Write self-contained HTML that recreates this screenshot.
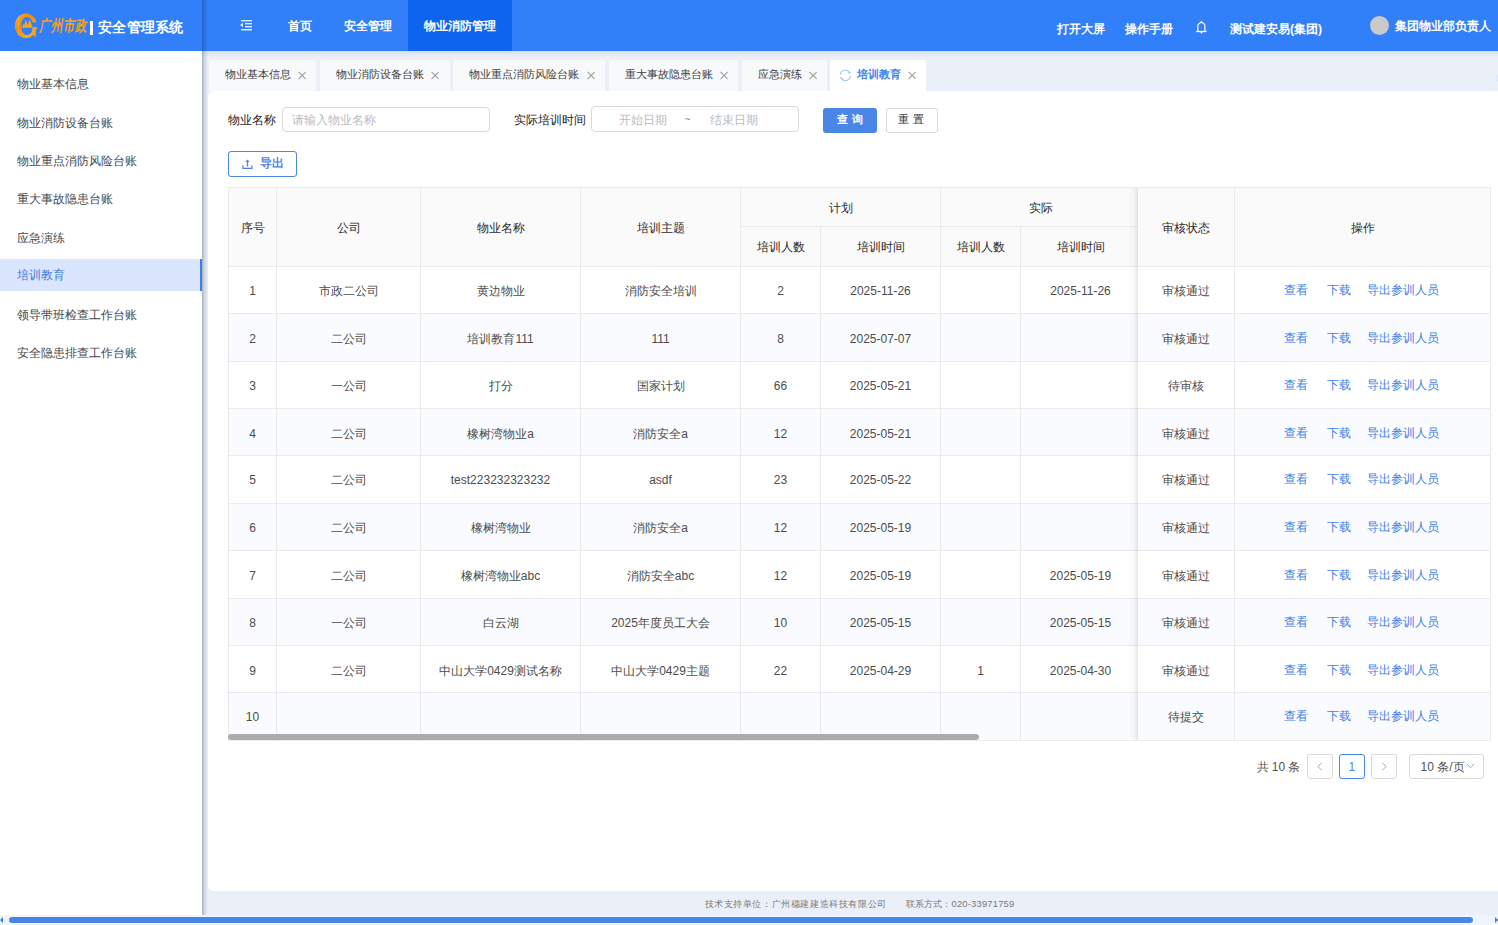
<!DOCTYPE html>
<html><head><meta charset="utf-8">
<style>
*{box-sizing:border-box;margin:0;padding:0}
html,body{width:1498px;height:925px;overflow:hidden;background:#fff;font-family:"Liberation Sans",sans-serif;}
.abs{position:absolute}
#hdr{position:absolute;left:0;top:0;width:1498px;height:51px;background:#317ff9;color:#fff}
#hdrsh{position:absolute;left:202px;top:51px;width:1296px;height:6px;background:linear-gradient(#dadee8,#ebf0f8)}
#side{position:absolute;left:0;top:51px;width:202px;height:864px;background:#fff}
#sidesh{position:absolute;left:202px;top:0;width:6px;height:915px;background:linear-gradient(90deg,rgba(0,20,60,.28),rgba(0,20,60,.12) 40%,rgba(0,20,60,0))}
#main{position:absolute;left:202px;top:51px;width:1296px;height:864px;background:#ebf0f8}
.t{position:absolute;white-space:nowrap;line-height:1}
.nav{font-size:12px;font-weight:bold;color:#fff}
.si{position:absolute;left:0;width:202px;height:32px;line-height:32px;padding-left:17px;font-size:12px;color:#48494c}
.si.act{background:#dae6fe;color:#3b7ae6}
.si.act:after{content:"";position:absolute;right:0;top:0;width:2px;height:32px;background:#3d7de6}
.tab{position:absolute;top:60px;height:31px;background:#f8f9fa;border-radius:3px 3px 0 0;font-size:11px;color:#48494c}
#card{position:absolute;left:208px;top:91px;width:1290px;height:800px;background:#fff;border-radius:6px 0 0 6px}

.tab .tx{position:absolute;top:69px;line-height:12px;font-size:11.25px}
.xx{position:absolute;width:8px;height:8px}
.xx:before,.xx:after{content:"";position:absolute;left:-1.2px;top:3.5px;width:10.4px;height:1px;background:#9a9a9a;transform:rotate(45deg)}
.xx:after{transform:rotate(-45deg)}
.lbl{position:absolute;font-size:12px;color:#1e1e1e;font-weight:500;line-height:1;white-space:nowrap}
.inp{position:absolute;border:1px solid #d9d9d9;border-radius:4px;background:#fff}
.ph{position:absolute;font-size:12px;color:#b8bcc4;line-height:1;white-space:nowrap}

.ln{position:absolute;background:#ebebeb}
.c{position:absolute;display:flex;align-items:center;justify-content:center;white-space:nowrap;font-size:12px;color:#4d4d4d;line-height:1;padding-top:2px}
.c.h{padding-top:1px}
.h{font-weight:500;color:#2b2b2b}
.c.lkc{color:#3f7fe6;font-weight:500;padding-top:0;justify-content:flex-start}
</style></head><body>
<div id="hdr">
 <svg class="abs" style="left:0;top:0" width="40" height="45" viewBox="0 0 40 45">
  <defs><linearGradient id="og" x1="0" y1="0" x2="1" y2="1"><stop offset="0" stop-color="#f7b224"/><stop offset="0.4" stop-color="#ee8a12"/><stop offset="0.75" stop-color="#f6ae22"/><stop offset="1" stop-color="#f39a18"/></linearGradient></defs>
  <ellipse cx="25.9" cy="25.75" rx="11" ry="12.25" fill="url(#og)"/>
  <rect x="21.5" y="17" width="11" height="18" rx="5.2" ry="6.5" fill="#317ff9"/>
  <rect x="30" y="22.4" width="9" height="4.9" fill="#317ff9"/>
  <rect x="33.8" y="27.3" width="2.1" height="9.3" fill="#f3a21c"/>
  <rect x="32.6" y="27.3" width="4.4" height="1.5" fill="#f3a21c"/>
  <path d="M18.3 16.5 L18.3 35.5" stroke="#f3d27a" stroke-width="0.6" opacity="0.7"/>
  <path d="M21.8 27.8 L23.8 23.4 L25 27.8 Z M23.6 27.8 L25.8 19.2 L28.4 27.8 Z M26.8 27.8 L29.6 19.2 L32.8 27.8 Z" fill="#f6a81c"/>
 </svg>
 <div class="t" style="left:41px;top:19px;font-size:11.5px;color:#f2a01c;font-weight:bold;transform-origin:0 0;transform:scale(1,1.35) skewX(-12deg);letter-spacing:0px">广州市政</div>
 <div class="abs" style="left:90px;top:21px;width:2.5px;height:14px;background:#fff"></div>
 <div class="t" style="left:98px;top:20px;font-size:14px;font-weight:bold;letter-spacing:0.3px">安全管理系统</div>
 <svg class="abs" style="left:240px;top:20px" width="13" height="12" viewBox="0 0 13 12">
  <g fill="#fff" opacity="0.85"><rect x="1" y="0" width="11" height="1.4"/><rect x="5" y="3" width="7" height="1.4"/><rect x="5" y="6" width="7" height="1.4"/><rect x="1" y="9" width="11" height="1.5"/><path d="M0 5 L3 2.8 L3 7.2 Z"/></g>
 </svg>
 <div class="t nav" style="left:288px;top:19.5px">首页</div>
 <div class="t nav" style="left:344px;top:19.5px">安全管理</div>
 <div class="abs" style="left:408px;top:0;width:104px;height:51px;background:#0e64ef"></div>
 <div class="t nav" style="left:424px;top:19.5px">物业消防管理</div>
 <div class="t nav" style="left:1057px;top:23px">打开大屏</div>
 <div class="t nav" style="left:1125px;top:23px">操作手册</div>
 <svg class="abs" style="left:1195px;top:20px" width="13" height="15" viewBox="0 0 13 15">
  <path d="M2.9 11.3 L2.9 5.6 Q2.9 4.2 4.2 3.5 L6.4 2.2 L8.6 3.5 Q9.9 4.2 9.9 5.6 L9.9 11.3" fill="none" stroke="#fff" stroke-width="1.15"/>
  <path d="M6.4 0.6 L7.6 2.6 L5.2 2.6 Z" fill="#fff"/>
  <path d="M1.2 11.5 L11.6 11.5" stroke="#fff" stroke-width="1.3"/>
  <path d="M5.2 12 L7.6 12 L6.4 14 Z" fill="#fff"/>
 </svg>
 <div class="t nav" style="left:1230px;top:22.5px">测试建安易(集团)</div>
 <div class="abs" style="left:1370px;top:16px;width:19px;height:19px;border-radius:50%;background:#cacaca"></div>
 <div class="t nav" style="left:1395px;top:19.5px">集团物业部负责人</div>
</div>
<div id="side"><div class="si" style="top:17px">物业基本信息</div><div class="si" style="top:56px">物业消防设备台账</div><div class="si" style="top:94px">物业重点消防风险台账</div><div class="si" style="top:132px">重大事故隐患台账</div><div class="si" style="top:171px">应急演练</div><div class="si act" style="top:208px">培训教育</div><div class="si" style="top:248px">领导带班检查工作台账</div><div class="si" style="top:286px">安全隐患排查工作台账</div></div>
<div id="main"></div>
<div id="hdrsh"></div>
<div id="sidesh"></div>
<div id="card"></div>
<div class="abs" style="left:1497px;top:75px;width:1px;height:6px;background:#d6e6fc"></div>
<div class="abs" style="left:209px;top:60px;width:107px;height:31px;background:#f8f9fa;border-radius:3px 3px 0 0"></div><div class="t" style="left:225.1px;top:69px;font-size:11.25px;color:#3e3f42;font-weight:normal">物业基本信息</div><div class="xx" style="left:298px;top:71px"></div><div class="abs" style="left:320px;top:60px;width:129.5px;height:31px;background:#f8f9fa;border-radius:3px 3px 0 0"></div><div class="t" style="left:335.8px;top:69px;font-size:11.25px;color:#3e3f42;font-weight:normal">物业消防设备台账</div><div class="xx" style="left:431.5px;top:71px"></div><div class="abs" style="left:453px;top:60px;width:152px;height:31px;background:#f8f9fa;border-radius:3px 3px 0 0"></div><div class="t" style="left:469.4px;top:69px;font-size:11.25px;color:#3e3f42;font-weight:normal">物业重点消防风险台账</div><div class="xx" style="left:587.4px;top:71px"></div><div class="abs" style="left:609px;top:60px;width:129px;height:31px;background:#f8f9fa;border-radius:3px 3px 0 0"></div><div class="t" style="left:625.0px;top:69px;font-size:11.25px;color:#3e3f42;font-weight:normal">重大事故隐患台账</div><div class="xx" style="left:720.3px;top:71px"></div><div class="abs" style="left:742px;top:60px;width:85px;height:31px;background:#f8f9fa;border-radius:3px 3px 0 0"></div><div class="t" style="left:757.7px;top:69px;font-size:11.25px;color:#3e3f42;font-weight:normal">应急演练</div><div class="xx" style="left:809.3px;top:71px"></div><div class="abs" style="left:830px;top:60px;width:96px;height:31px;background:#fff;border-radius:3px 3px 0 0"></div><div class="t" style="left:857.3px;top:69px;font-size:11.25px;color:#4485ea;font-weight:bold">培训教育</div><div class="xx" style="left:908.4px;top:71px"></div><svg class="abs" style="left:839px;top:68.7px" width="13" height="13" viewBox="0 0 13 13"><g fill="none" stroke="#a3c6fa" stroke-width="1.1"><path d="M1.25 5.68 A5.2 5.2 0 0 1 11.11 4.20"/><path d="M11.55 7.12 A5.2 5.2 0 0 1 1.69 8.60"/><path d="M9.0 3.9 L11.5 3.9"/><path d="M1.3 8.9 L3.8 8.9"/></g></svg>
<div class="lbl" style="left:228px;top:113.5px">物业名称</div>
<div class="inp" style="left:282px;top:107px;width:208px;height:24.5px"></div>
<div class="ph" style="left:292px;top:113.5px">请输入物业名称</div>
<div class="lbl" style="left:513.5px;top:113.5px">实际培训时间</div>
<div class="inp" style="left:591px;top:106px;width:208px;height:25.5px"></div>
<div class="ph" style="left:618.5px;top:113.5px">开始日期</div>
<div class="ph" style="left:684.5px;top:115px;color:#888;font-size:10px">~</div>
<div class="ph" style="left:710px;top:113.5px">结束日期</div>
<div class="abs" style="left:823px;top:108px;width:54px;height:25px;background:#4a86e5;border-radius:3px"></div>
<div class="t" style="left:836.5px;top:113.5px;font-size:11.3px;color:#fff;font-weight:bold;word-spacing:1.3px">查 询</div>
<div class="abs" style="left:885.5px;top:108px;width:52px;height:24.5px;border:1px solid #d9d9d9;border-radius:3px;background:#fff"></div>
<div class="t" style="left:898px;top:113.5px;font-size:11.3px;color:#333;font-weight:500;word-spacing:1.3px">重 置</div>
<div class="abs" style="left:228px;top:151px;width:69px;height:26px;border:1px solid #4a86e5;border-radius:3px;background:#fff"></div>
<svg class="abs" style="left:241.5px;top:159px" width="11" height="11" viewBox="0 0 11 11"><path d="M3.3 3 L5.5 0.5 L7.7 3 Z" fill="#4a86e5"/><rect x="4.85" y="2.5" width="1.3" height="5" fill="#4a86e5"/><path d="M1 6.2 L1 9.3 L10 9.3 L10 6.2" fill="none" stroke="#4a86e5" stroke-width="1.2"/></svg>
<div class="t" style="left:260px;top:158px;font-size:11.5px;color:#4a86e5;font-weight:bold">导出</div>

<div id="tbl"><div class="abs" style="left:228px;top:187px;width:1262px;height:79px;background:#fafafa"></div><div class="abs" style="left:228px;top:314px;width:1262px;height:47px;background:#f9fbfe"></div><div class="abs" style="left:228px;top:409px;width:1262px;height:46px;background:#f9fbfe"></div><div class="abs" style="left:228px;top:504px;width:1262px;height:46px;background:#f9fbfe"></div><div class="abs" style="left:228px;top:599px;width:1262px;height:46px;background:#f9fbfe"></div><div class="abs" style="left:228px;top:693px;width:1262px;height:46px;background:#f9fbfe"></div><div class="c h" style="left:229px;top:188px;width:47px;height:78px">序号</div><div class="c h" style="left:277px;top:188px;width:143px;height:78px">公司</div><div class="c h" style="left:421px;top:188px;width:159px;height:78px">物业名称</div><div class="c h" style="left:581px;top:188px;width:159px;height:78px">培训主题</div><div class="c h" style="left:741px;top:188px;width:199px;height:38px">计划</div><div class="c h" style="left:941px;top:188px;width:199px;height:38px">实际</div><div class="c h" style="left:741px;top:227px;width:79px;height:39px">培训人数</div><div class="c h" style="left:821px;top:227px;width:119px;height:39px">培训时间</div><div class="c h" style="left:941px;top:227px;width:79px;height:39px">培训人数</div><div class="c h" style="left:1021px;top:227px;width:119px;height:39px">培训时间</div><div class="c" style="left:229px;top:267px;width:47px;height:46px">1</div><div class="c" style="left:277px;top:267px;width:143px;height:46px">市政二公司</div><div class="c" style="left:421px;top:267px;width:159px;height:46px">黄边物业</div><div class="c" style="left:581px;top:267px;width:159px;height:46px">消防安全培训</div><div class="c" style="left:741px;top:267px;width:79px;height:46px">2</div><div class="c" style="left:821px;top:267px;width:119px;height:46px">2025-11-26</div><div class="c" style="left:1021px;top:267px;width:119px;height:46px">2025-11-26</div><div class="c" style="left:229px;top:314px;width:47px;height:47px">2</div><div class="c" style="left:277px;top:314px;width:143px;height:47px">二公司</div><div class="c" style="left:421px;top:314px;width:159px;height:47px">培训教育111</div><div class="c" style="left:581px;top:314px;width:159px;height:47px">111</div><div class="c" style="left:741px;top:314px;width:79px;height:47px">8</div><div class="c" style="left:821px;top:314px;width:119px;height:47px">2025-07-07</div><div class="c" style="left:229px;top:362px;width:47px;height:46px">3</div><div class="c" style="left:277px;top:362px;width:143px;height:46px">一公司</div><div class="c" style="left:421px;top:362px;width:159px;height:46px">打分</div><div class="c" style="left:581px;top:362px;width:159px;height:46px">国家计划</div><div class="c" style="left:741px;top:362px;width:79px;height:46px">66</div><div class="c" style="left:821px;top:362px;width:119px;height:46px">2025-05-21</div><div class="c" style="left:229px;top:409px;width:47px;height:47px">4</div><div class="c" style="left:277px;top:409px;width:143px;height:47px">二公司</div><div class="c" style="left:421px;top:409px;width:159px;height:47px">橡树湾物业a</div><div class="c" style="left:581px;top:409px;width:159px;height:47px">消防安全a</div><div class="c" style="left:741px;top:409px;width:79px;height:47px">12</div><div class="c" style="left:821px;top:409px;width:119px;height:47px">2025-05-21</div><div class="c" style="left:229px;top:456px;width:47px;height:46px">5</div><div class="c" style="left:277px;top:456px;width:143px;height:46px">二公司</div><div class="c" style="left:421px;top:456px;width:159px;height:46px">test223232323232</div><div class="c" style="left:581px;top:456px;width:159px;height:46px">asdf</div><div class="c" style="left:741px;top:456px;width:79px;height:46px">23</div><div class="c" style="left:821px;top:456px;width:119px;height:46px">2025-05-22</div><div class="c" style="left:229px;top:504px;width:47px;height:46px">6</div><div class="c" style="left:277px;top:504px;width:143px;height:46px">二公司</div><div class="c" style="left:421px;top:504px;width:159px;height:46px">橡树湾物业</div><div class="c" style="left:581px;top:504px;width:159px;height:46px">消防安全a</div><div class="c" style="left:741px;top:504px;width:79px;height:46px">12</div><div class="c" style="left:821px;top:504px;width:119px;height:46px">2025-05-19</div><div class="c" style="left:229px;top:551px;width:47px;height:47px">7</div><div class="c" style="left:277px;top:551px;width:143px;height:47px">二公司</div><div class="c" style="left:421px;top:551px;width:159px;height:47px">橡树湾物业abc</div><div class="c" style="left:581px;top:551px;width:159px;height:47px">消防安全abc</div><div class="c" style="left:741px;top:551px;width:79px;height:47px">12</div><div class="c" style="left:821px;top:551px;width:119px;height:47px">2025-05-19</div><div class="c" style="left:1021px;top:551px;width:119px;height:47px">2025-05-19</div><div class="c" style="left:229px;top:599px;width:47px;height:46px">8</div><div class="c" style="left:277px;top:599px;width:143px;height:46px">一公司</div><div class="c" style="left:421px;top:599px;width:159px;height:46px">白云湖</div><div class="c" style="left:581px;top:599px;width:159px;height:46px">2025年度员工大会</div><div class="c" style="left:741px;top:599px;width:79px;height:46px">10</div><div class="c" style="left:821px;top:599px;width:119px;height:46px">2025-05-15</div><div class="c" style="left:1021px;top:599px;width:119px;height:46px">2025-05-15</div><div class="c" style="left:229px;top:646px;width:47px;height:47px">9</div><div class="c" style="left:277px;top:646px;width:143px;height:47px">二公司</div><div class="c" style="left:421px;top:646px;width:159px;height:47px">中山大学0429测试名称</div><div class="c" style="left:581px;top:646px;width:159px;height:47px">中山大学0429主题</div><div class="c" style="left:741px;top:646px;width:79px;height:47px">22</div><div class="c" style="left:821px;top:646px;width:119px;height:47px">2025-04-29</div><div class="c" style="left:941px;top:646px;width:79px;height:47px">1</div><div class="c" style="left:1021px;top:646px;width:119px;height:47px">2025-04-30</div><div class="c" style="left:229px;top:693px;width:47px;height:46px">10</div><div class="ln" style="left:276px;top:187px;width:1px;height:553px;height:553px"></div><div class="ln" style="left:420px;top:187px;width:1px;height:553px;height:553px"></div><div class="ln" style="left:580px;top:187px;width:1px;height:553px;height:553px"></div><div class="ln" style="left:740px;top:187px;width:1px;height:553px;height:553px"></div><div class="ln" style="left:820px;top:226px;width:1px;height:553px;height:514px"></div><div class="ln" style="left:940px;top:187px;width:1px;height:553px;height:553px"></div><div class="ln" style="left:1020px;top:226px;width:1px;height:553px;height:514px"></div><div class="ln" style="left:228px;top:187px;width:1px;height:553px"></div><div class="ln" style="left:228px;top:187px;width:1262px;height:1px"></div><div class="ln" style="left:740px;top:226px;width:400px;height:1px"></div><div class="ln" style="left:228px;top:266px;width:1262px;height:1px"></div><div class="ln" style="left:228px;top:313px;width:1262px;height:1px"></div><div class="ln" style="left:228px;top:361px;width:1262px;height:1px"></div><div class="ln" style="left:228px;top:408px;width:1262px;height:1px"></div><div class="ln" style="left:228px;top:455px;width:1262px;height:1px"></div><div class="ln" style="left:228px;top:503px;width:1262px;height:1px"></div><div class="ln" style="left:228px;top:550px;width:1262px;height:1px"></div><div class="ln" style="left:228px;top:598px;width:1262px;height:1px"></div><div class="ln" style="left:228px;top:645px;width:1262px;height:1px"></div><div class="ln" style="left:228px;top:692px;width:1262px;height:1px"></div><div class="ln" style="left:228px;top:740px;width:1262px;height:1px"></div><div class="abs" style="left:228px;top:734px;width:751px;height:6px;border-radius:3px;background:rgba(150,152,156,.8)"></div><div class="abs" style="left:1128px;top:188px;width:10px;height:552px;background:linear-gradient(90deg,rgba(0,0,0,0),rgba(0,0,0,.025) 60%,rgba(0,0,0,.09))"></div><div class="abs" style="left:1138px;top:187px;width:352px;height:553px;background:#fff"></div><div class="abs" style="left:1138px;top:187px;width:352px;height:79px;background:#fafafa"></div><div class="abs" style="left:1138px;top:314px;width:352px;height:47px;background:#f9fbfe"></div><div class="abs" style="left:1138px;top:409px;width:352px;height:46px;background:#f9fbfe"></div><div class="abs" style="left:1138px;top:504px;width:352px;height:46px;background:#f9fbfe"></div><div class="abs" style="left:1138px;top:599px;width:352px;height:46px;background:#f9fbfe"></div><div class="abs" style="left:1138px;top:693px;width:352px;height:46px;background:#f9fbfe"></div><div class="c h" style="left:1138px;top:188px;width:96px;height:78px">审核状态</div><div class="c h" style="left:1235px;top:188px;width:255px;height:78px">操作</div><div class="c" style="left:1138px;top:267px;width:96px;height:46px">审核通过</div><div class="c lkc" style="left:1283.5px;top:267px;width:24px;height:46px">查看</div><div class="c lkc" style="left:1326.5px;top:267px;width:24px;height:46px">下载</div><div class="c lkc" style="left:1367px;top:267px;width:72px;height:46px">导出参训人员</div><div class="c" style="left:1138px;top:314px;width:96px;height:47px">审核通过</div><div class="c lkc" style="left:1283.5px;top:314px;width:24px;height:47px">查看</div><div class="c lkc" style="left:1326.5px;top:314px;width:24px;height:47px">下载</div><div class="c lkc" style="left:1367px;top:314px;width:72px;height:47px">导出参训人员</div><div class="c" style="left:1138px;top:362px;width:96px;height:46px">待审核</div><div class="c lkc" style="left:1283.5px;top:362px;width:24px;height:46px">查看</div><div class="c lkc" style="left:1326.5px;top:362px;width:24px;height:46px">下载</div><div class="c lkc" style="left:1367px;top:362px;width:72px;height:46px">导出参训人员</div><div class="c" style="left:1138px;top:409px;width:96px;height:47px">审核通过</div><div class="c lkc" style="left:1283.5px;top:409px;width:24px;height:47px">查看</div><div class="c lkc" style="left:1326.5px;top:409px;width:24px;height:47px">下载</div><div class="c lkc" style="left:1367px;top:409px;width:72px;height:47px">导出参训人员</div><div class="c" style="left:1138px;top:456px;width:96px;height:46px">审核通过</div><div class="c lkc" style="left:1283.5px;top:456px;width:24px;height:46px">查看</div><div class="c lkc" style="left:1326.5px;top:456px;width:24px;height:46px">下载</div><div class="c lkc" style="left:1367px;top:456px;width:72px;height:46px">导出参训人员</div><div class="c" style="left:1138px;top:504px;width:96px;height:46px">审核通过</div><div class="c lkc" style="left:1283.5px;top:504px;width:24px;height:46px">查看</div><div class="c lkc" style="left:1326.5px;top:504px;width:24px;height:46px">下载</div><div class="c lkc" style="left:1367px;top:504px;width:72px;height:46px">导出参训人员</div><div class="c" style="left:1138px;top:551px;width:96px;height:47px">审核通过</div><div class="c lkc" style="left:1283.5px;top:551px;width:24px;height:47px">查看</div><div class="c lkc" style="left:1326.5px;top:551px;width:24px;height:47px">下载</div><div class="c lkc" style="left:1367px;top:551px;width:72px;height:47px">导出参训人员</div><div class="c" style="left:1138px;top:599px;width:96px;height:46px">审核通过</div><div class="c lkc" style="left:1283.5px;top:599px;width:24px;height:46px">查看</div><div class="c lkc" style="left:1326.5px;top:599px;width:24px;height:46px">下载</div><div class="c lkc" style="left:1367px;top:599px;width:72px;height:46px">导出参训人员</div><div class="c" style="left:1138px;top:646px;width:96px;height:47px">审核通过</div><div class="c lkc" style="left:1283.5px;top:646px;width:24px;height:47px">查看</div><div class="c lkc" style="left:1326.5px;top:646px;width:24px;height:47px">下载</div><div class="c lkc" style="left:1367px;top:646px;width:72px;height:47px">导出参训人员</div><div class="c" style="left:1138px;top:693px;width:96px;height:46px">待提交</div><div class="c lkc" style="left:1283.5px;top:693px;width:24px;height:46px">查看</div><div class="c lkc" style="left:1326.5px;top:693px;width:24px;height:46px">下载</div><div class="c lkc" style="left:1367px;top:693px;width:72px;height:46px">导出参训人员</div><div class="ln" style="left:1138px;top:266px;width:352px;height:1px"></div><div class="ln" style="left:1138px;top:313px;width:352px;height:1px"></div><div class="ln" style="left:1138px;top:361px;width:352px;height:1px"></div><div class="ln" style="left:1138px;top:408px;width:352px;height:1px"></div><div class="ln" style="left:1138px;top:455px;width:352px;height:1px"></div><div class="ln" style="left:1138px;top:503px;width:352px;height:1px"></div><div class="ln" style="left:1138px;top:550px;width:352px;height:1px"></div><div class="ln" style="left:1138px;top:598px;width:352px;height:1px"></div><div class="ln" style="left:1138px;top:645px;width:352px;height:1px"></div><div class="ln" style="left:1138px;top:692px;width:352px;height:1px"></div><div class="ln" style="left:1138px;top:740px;width:352px;height:1px"></div><div class="ln" style="left:1138px;top:187px;width:352px;height:1px"></div><div class="ln" style="left:1234px;top:187px;width:1px;height:553px"></div><div class="ln" style="left:1490px;top:187px;width:1px;height:553px"></div></div>
<div class="t" style="left:1257px;top:761px;font-size:12px;color:#555;word-spacing:-0.5px">共 10 条</div>
<div class="abs" style="left:1307px;top:754px;width:26px;height:25px;border:1px solid #d9d9d9;border-radius:3px;background:#fff"></div>
<svg class="abs" style="left:1316px;top:762px" width="8" height="9" viewBox="0 0 8 9"><path d="M5.5 0.8 L2 4.5 L5.5 8.2" fill="none" stroke="#a6a6a6" stroke-width="1"/></svg>
<div class="abs" style="left:1339px;top:754px;width:26px;height:25px;border:1px solid #4a86e5;border-radius:3px;background:#fff"></div>
<div class="t" style="left:1348.5px;top:761px;font-size:12px;color:#4a86e5">1</div>
<div class="abs" style="left:1371px;top:754px;width:26px;height:25px;border:1px solid #d9d9d9;border-radius:3px;background:#fff"></div>
<svg class="abs" style="left:1380px;top:762px" width="8" height="9" viewBox="0 0 8 9"><path d="M2.5 0.8 L6 4.5 L2.5 8.2" fill="none" stroke="#a6a6a6" stroke-width="1"/></svg>
<div class="abs" style="left:1409px;top:754px;width:75px;height:25px;border:1px solid #d9d9d9;border-radius:3px;background:#fff"></div>
<div class="t" style="left:1420.5px;top:761px;font-size:12px;color:#555;word-spacing:0px">10 条/页</div>
<svg class="abs" style="left:1466px;top:763px" width="9" height="6" viewBox="0 0 9 6"><path d="M0.8 0.8 L4.5 4.8 L8.2 0.8" fill="none" stroke="#aaa" stroke-width="1"/></svg>
<div class="t" style="left:704.5px;top:898.5px;font-size:9.4px;color:#7a7a7a;letter-spacing:0.6px">技术支持单位：广州穗建建造科技有限公司</div>
<div class="t" style="left:905.5px;top:898.5px;font-size:9.4px;color:#7a7a7a;letter-spacing:0.2px">联系方式：020-33971759</div>
<div class="abs" style="left:0;top:915px;width:1498px;height:10px;background:#eff5fd"></div>
<div class="abs" style="left:9px;top:917px;width:1464px;height:6px;border-radius:3px;background:#4a86e5"></div>
<svg class="abs" style="left:0;top:916px" width="4" height="8" viewBox="0 0 4 8"><path d="M3 1 L3 7 L0 4 Z" fill="#3d7ae0"/></svg>
<svg class="abs" style="left:1494px;top:916px" width="4" height="8" viewBox="0 0 4 8"><path d="M1 1 L1 7 L4 4 Z" fill="#3d7ae0"/></svg>
</body></html>
